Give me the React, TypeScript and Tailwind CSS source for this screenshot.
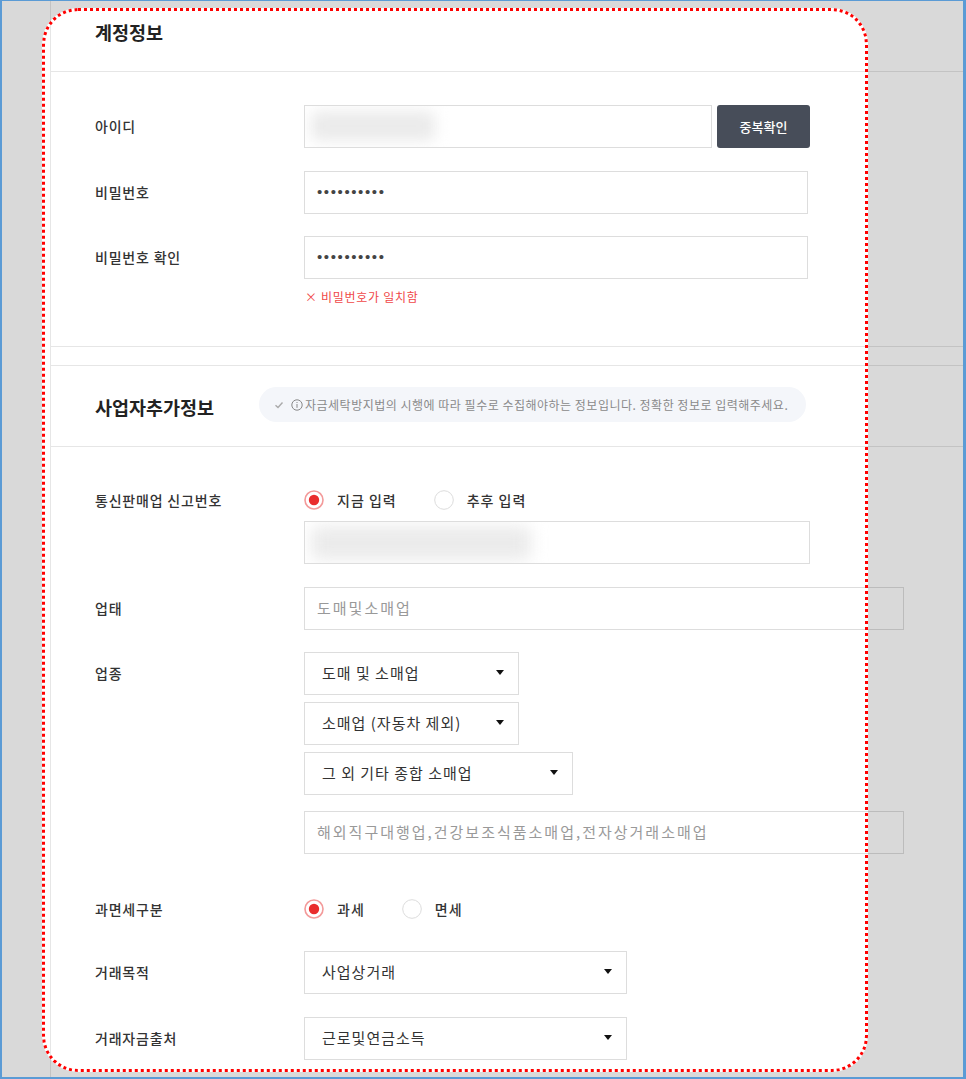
import React from 'react';

const FONT = "font-['Noto_Sans_CJK_KR','Noto_Sans',sans-serif]";

const Radio: React.FC<{ checked?: boolean; label: string }> = ({ checked, label }) => (
    <div className="flex items-center gap-[13px] mr-[37px]">
        <svg width="20" height="20" viewBox="0 0 20 20">
            {checked ? (
                <>
                    <circle cx="10" cy="10" r="9" fill="#fff" stroke="#f39a9a" strokeWidth="1.6" />
                    <circle cx="10" cy="10" r="5.2" fill="#e92d2d" />
                </>
            ) : (
                <circle cx="10" cy="10" r="9.3" fill="#fff" stroke="#dcdcdc" strokeWidth="1" />
            )}
        </svg>
        <span className="text-[14px] font-medium tracking-[1px] text-[#333] leading-[20px]">{label}</span>
    </div>
);

const Select: React.FC<{ value: string; width: string; className?: string }> = ({ value, width, className = '' }) => (
    <div className={`h-[43px] ${width} ${className} border border-[#dddddd] bg-white flex items-center justify-between pl-[17px] pr-[14px]`}>
        <span className="text-[15px] tracking-[1px] text-[#333]">{value}</span>
        <span className="w-0 h-0 border-l-[4px] border-r-[4px] border-t-[5px] border-l-transparent border-r-transparent border-t-[#111] -mt-[2px]" />
    </div>
);

const Label: React.FC<{ text: string; h: string }> = ({ text, h }) => (
    <div className={`w-[209px] shrink-0 ${h} flex items-center text-[14px] tracking-[0.8px] font-medium text-[#333]`}>{text}</div>
);

const App: React.FC = () => {
    return (
        <div className={`relative w-[966px] h-[1079px] overflow-hidden bg-white border-[#5b9bd5] border-l-2 border-t border-r-[3px] border-b-[2px] ${FONT}`}>
            <div className="ml-[48px] h-full border-l border-[#e6e6e6]">
                {/* 계정정보 */}
                <div className="border-b border-[#e6e6e6]">
                    <div className="h-[71px] border-b border-[#e6e6e6] pl-[44px] pt-[18px]">
                        <h2 className="text-[18.5px] leading-[26px] font-bold text-[#222]">계정정보</h2>
                    </div>
                    <div className="pl-[44px] pt-[33px] pb-[41px]">
                        <div className="flex">
                            <Label text="아이디" h="h-[43px]" />
                            <div className="relative h-[43px] w-[408px] border border-[#dddddd] overflow-hidden">
                                <div className="absolute left-[6px] top-[5px] w-[124px] h-[30px] bg-[#ebebeb] blur-[7px] rounded-md" />
                            </div>
                            <button className="h-[43px] w-[93px] ml-[5px] rounded-[3px] bg-[#474d59] text-white text-[13px] font-medium">
                                중복확인
                            </button>
                        </div>
                        <div className="flex mt-[23px]">
                            <Label text="비밀번호" h="h-[43px]" />
                            <div className="h-[43px] w-[504px] border border-[#dddddd] flex items-center pl-[12px]">
                                <span className="font-['Liberation_Sans',sans-serif] text-[15px] tracking-[1.6px] text-[#444]">••••••••••</span>
                            </div>
                        </div>
                        <div className="flex mt-[22px]">
                            <Label text="비밀번호 확인" h="h-[43px]" />
                            <div>
                                <div className="h-[43px] w-[504px] border border-[#dddddd] flex items-center pl-[12px]">
                                    <span className="font-['Liberation_Sans',sans-serif] text-[15px] tracking-[1.6px] text-[#444]">••••••••••</span>
                                </div>
                                <div className="mt-[10px] text-[12px] tracking-[0.7px] leading-[16px] text-[#f04848] pl-[1px]">× 비밀번호가 일치함</div>
                            </div>
                        </div>
                    </div>
                </div>

                {/* 사업자추가정보 */}
                <div className="mt-[18px] border-t border-[#e6e6e6]">
                    <div className="h-[81px] border-b border-[#e6e6e6] pl-[44px] pb-[3px] flex items-center">
                        <h2 className="w-[164px] shrink-0 text-[18.5px] leading-[26px] font-bold text-[#222] mt-[4px]">사업자추가정보</h2>
                        <div className="h-[35px] w-[547px] rounded-full bg-[#f4f6fa] flex items-center pl-[15px] text-[12px] tracking-[0.5px] text-[#8a8a8a]">
                            <svg width="10" height="10" viewBox="0 0 10 10" className="mr-[7px]">
                                <polyline points="1.5,5.2 4,7.5 8.5,2.5" fill="none" stroke="#aaa" strokeWidth="1.4" />
                            </svg>
                            <svg width="12" height="12" viewBox="0 0 12 12" className="mr-[2px]">
                                <circle cx="6" cy="6" r="5.2" fill="none" stroke="#888" strokeWidth="1" />
                                <rect x="5.5" y="5" width="1" height="3.8" fill="#888" />
                                <rect x="5.5" y="3" width="1" height="1" fill="#888" />
                            </svg>
                            <span>자금세탁방지법의 시행에 따라 필수로 수집해야하는 정보입니다. 정확한 정보로 입력해주세요.</span>
                        </div>
                    </div>
                    <div className="pl-[44px] pt-[43px]">
                        <div className="flex">
                            <Label text="통신판매업 신고번호" h="h-[20px]" />
                            <div>
                                <div className="flex h-[20px]">
                                    <Radio checked label="지금 입력" />
                                    <Radio label="추후 입력" />
                                </div>
                                <div className="relative mt-[11px] h-[43px] w-[506px] border border-[#dddddd] overflow-hidden">
                                    <div className="absolute left-[6px] top-[4px] w-[220px] h-[34px] bg-[#ebebeb] blur-[8px] rounded-md" />
                                </div>
                            </div>
                        </div>
                        <div className="flex mt-[23px]">
                            <Label text="업태" h="h-[43px]" />
                            <div className="h-[43px] w-[600px] border border-[#dddddd] flex items-center pl-[12px] text-[15px] tracking-[2px] text-[#999]">
                                도매및소매업
                            </div>
                        </div>
                        <div className="flex mt-[22px]">
                            <Label text="업종" h="h-[43px]" />
                            <div>
                                <Select value="도매 및 소매업" width="w-[215px]" />
                                <Select value="소매업 (자동차 제외)" width="w-[215px]" className="mt-[7px]" />
                                <Select value="그 외 기타 종합 소매업" width="w-[269px]" className="mt-[7px]" />
                                <div className="mt-[16px] h-[43px] w-[600px] border border-[#dddddd] flex items-center pl-[12px] text-[15px] tracking-[2px] text-[#999]">
                                    해외직구대행업,건강보조식품소매업,전자상거래소매업
                                </div>
                            </div>
                        </div>
                        <div className="flex mt-[45px]">
                            <Label text="과면세구분" h="h-[20px]" />
                            <div className="flex h-[20px]">
                                <Radio checked label="과세" />
                                <Radio label="면세" />
                            </div>
                        </div>
                        <div className="flex mt-[32px]">
                            <Label text="거래목적" h="h-[43px]" />
                            <Select value="사업상거래" width="w-[323px]" />
                        </div>
                        <div className="flex mt-[23px]">
                            <Label text="거래자금출처" h="h-[43px]" />
                            <Select value="근로및연금소득" width="w-[323px]" />
                        </div>
                    </div>
                </div>
            </div>

            {/* highlight overlay */}
            <div className="pointer-events-none absolute left-[40px] top-[7px] w-[826px] h-[1064px] rounded-[36px] border-[3px] border-dotted border-[#ff0000] shadow-[0_0_0_2000px_rgba(0,0,0,0.15)]" />
        </div>
    );
};

export default App;
